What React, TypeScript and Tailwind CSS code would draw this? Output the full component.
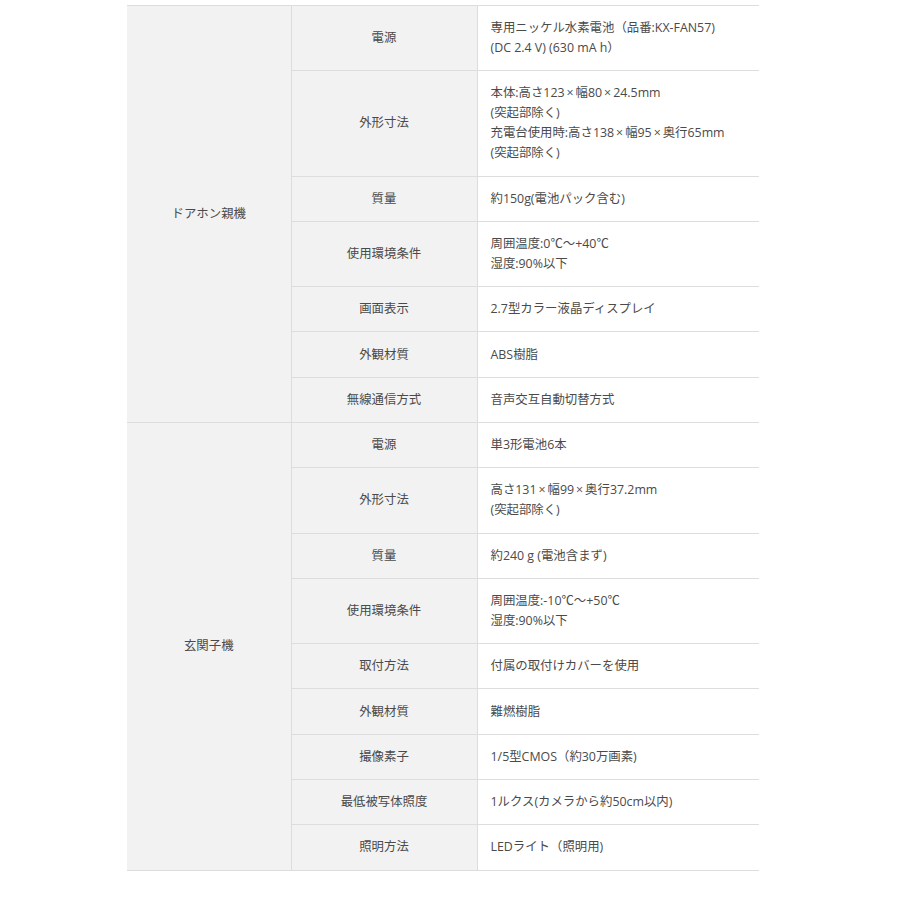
import React from "react";

type Row = { label: string; value: string[] };

const groups: { name: string; rows: Row[] }[] = [
  {
    name: "ドアホン親機",
    rows: [
      { label: "電源", value: ["専用ニッケル水素電池（品番:KX-FAN57)", "(DC 2.4 V) (630 mA h）"] },
      {
        label: "外形寸法",
        value: ["本体:高さ123×幅80×24.5mm", "(突起部除く)", "充電台使用時:高さ138×幅95×奥行65mm", "(突起部除く)"],
      },
      { label: "質量", value: ["約150g(電池パック含む)"] },
      { label: "使用環境条件", value: ["周囲温度:0℃～+40℃", "湿度:90%以下"] },
      { label: "画面表示", value: ["2.7型カラー液晶ディスプレイ"] },
      { label: "外観材質", value: ["ABS樹脂"] },
      { label: "無線通信方式", value: ["音声交互自動切替方式"] },
    ],
  },
  {
    name: "玄関子機",
    rows: [
      { label: "電源", value: ["単3形電池6本"] },
      { label: "外形寸法", value: ["高さ131×幅99×奥行37.2mm", "(突起部除く)"] },
      { label: "質量", value: ["約240 g (電池含まず)"] },
      { label: "使用環境条件", value: ["周囲温度:-10℃～+50℃", "湿度:90%以下"] },
      { label: "取付方法", value: ["付属の取付けカバーを使用"] },
      { label: "外観材質", value: ["難燃樹脂"] },
      { label: "撮像素子", value: ["1/5型CMOS（約30万画素)"] },
      { label: "最低被写体照度", value: ["1ルクス(カメラから約50cm以内)"] },
      { label: "照明方法", value: ["LEDライト（照明用)"] },
    ],
  },
];

function Line({ text }: { text: string }) {
  const parts = text.split("×");
  return (
    <div className="whitespace-nowrap">
      {parts.map((p, i) => (
        <React.Fragment key={i}>
          {i > 0 && <span className="inline-block w-[11px] text-center">×</span>}
          {p}
        </React.Fragment>
      ))}
    </div>
  );
}

export default function App() {
  return (
    <div
      className="w-[900px] h-[900px] bg-white pt-[5px] pl-[127px] text-[#4a4a4a] text-[12.4px] leading-[20px]"
      style={{ fontFamily: '"Open Sans", "Noto Sans CJK JP", sans-serif' }}
    >
      <table className="w-[632px] border-collapse table-fixed">
        <colgroup>
          <col className="w-[164px]" />
          <col className="w-[186px]" />
          <col className="w-[282px]" />
        </colgroup>
        <tbody>
          {groups.map((g) =>
            g.rows.map((r, i) => (
              <tr key={g.name + i}>
                {i === 0 && (
                  <th
                    rowSpan={g.rows.length}
                    className="bg-[#f2f2f2] border-t border-b border-r border-[#dddddd] font-normal text-center align-middle"
                  >
                    {g.name}
                  </th>
                )}
                <th className="bg-[#f2f2f2] border border-[#dddddd] font-normal text-center align-middle py-[12.15px]">
                  {r.label}
                </th>
                <td className="border-t border-b border-[#dddddd] pl-[13px] pr-2 py-[12.15px] align-middle">
                  {r.value.map((v, k) => (
                    <Line key={k} text={v} />
                  ))}
                </td>
              </tr>
            ))
          )}
        </tbody>
      </table>
    </div>
  );
}
